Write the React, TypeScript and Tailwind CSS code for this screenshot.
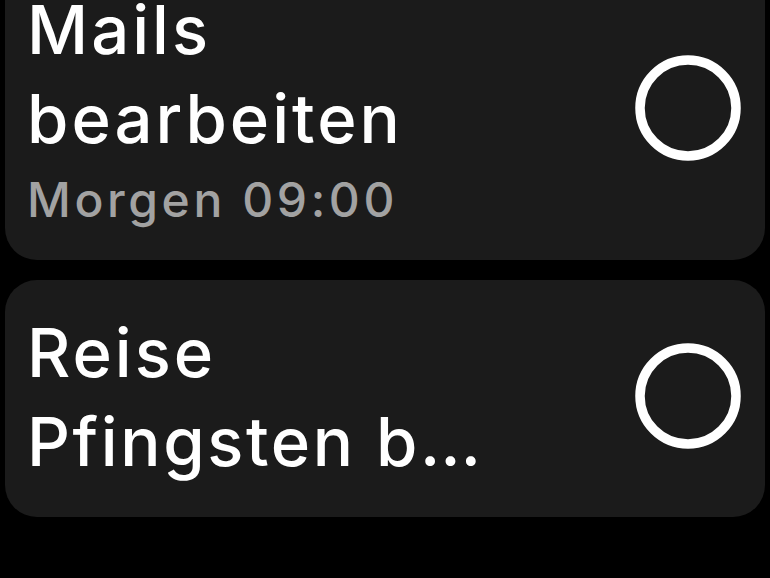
import React from "react";

function Ring() {
  return (
    <svg width="106" height="106" viewBox="0 0 106 106" className="shrink-0">
      <circle cx="53" cy="53" r="48" fill="none" stroke="#ffffff" strokeWidth="9.5" />
    </svg>
  );
}

export default function App() {
  const font = { fontFamily: "Inter, 'Noto Sans', sans-serif" };
  return (
    <div className="w-[770px] h-[578px] bg-black overflow-hidden" style={font}>
      <div className="flex flex-col gap-[20px] px-[5px] mt-[-43px]">
        <div className="flex items-center justify-between bg-[#1b1b1b] rounded-[32px] pl-[22px] pr-[24px] pt-[28px] pb-[23px]">
          <div className="flex flex-col font-medium">
            <span className="text-white text-[67px] leading-[89px] tracking-[3px]">Mails</span>
            <span className="text-white text-[67px] leading-[89px] tracking-[3px]">bearbeiten</span>
            <span className="text-[#a2a2a2] text-[48px] leading-[74px] tracking-[3.6px]">Morgen 09:00</span>
          </div>
          <div className="mb-[6px]">
            <Ring />
          </div>
        </div>
        <div className="flex items-center justify-between bg-[#1b1b1b] rounded-[32px] pl-[22px] pr-[24px] pt-[28px] pb-[31px]">
          <div className="flex flex-col font-medium">
            <span className="text-white text-[67px] leading-[89px] tracking-[3px]">Reise</span>
            <span className="text-white text-[67px] leading-[89px] tracking-[2.6px]">Pfingsten b…</span>
          </div>
          <div className="mb-[2px]">
            <Ring />
          </div>
        </div>
      </div>
    </div>
  );
}
